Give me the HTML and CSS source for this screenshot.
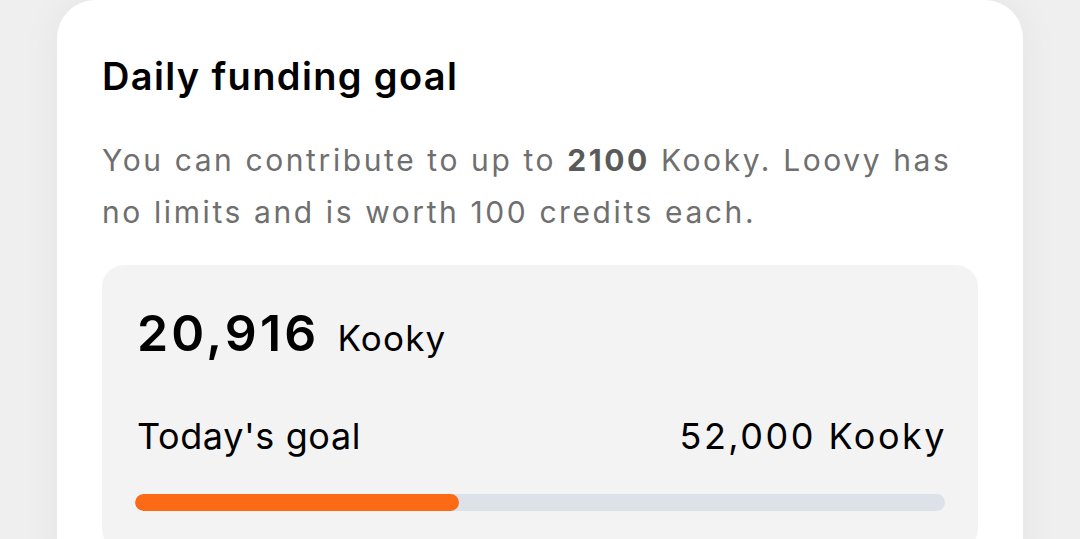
FILE: index.html
```html
<!DOCTYPE html>
<html lang="en">
<head>
    <meta charset="UTF-8">
    <meta name="viewport" content="width=device-width, initial-scale=1.0">
    <title>Daily funding goal</title>
    <link rel="stylesheet" href="styles.css">
</head>
<body>
    <div class="card">
        <h2 class="card-title">Daily funding goal</h2>
        <p class="card-desc">You can contribute to up to <b>2100</b> Kooky. Loovy has no limits and is worth 100 credits each.</p>

        <div class="goal-box">
            <div class="goal-total">
                <span class="goal-amount">20,916</span>
                <span class="goal-unit">Kooky</span>
            </div>
            <div class="goal-row">
                <span>Today's goal</span>
                <span class="goal-target">52,000 Kooky</span>
            </div>
            <div class="goal-bar">
                <div class="goal-fill" style="width: 40%"></div>
            </div>
        </div>
    </div>
</body>
</html>
```

FILE: styles.css
```css
body {
    margin: 0;
    padding: 0 57px;
    background-color: #efefef;
    font-family: Inter, "Noto Sans", sans-serif;
    color: #000;
    height: 539px;
    overflow: hidden;
}
.card {
    background-color: #fff;
    border-radius: 38px;
    padding: 50px 45px 40px;
    box-shadow: 0 0 40px rgba(0, 0, 0, 0.05);
}
.card-title {
    margin: 0;
    font-size: 38px;
    font-weight: 600;
    letter-spacing: 1.35px;
    line-height: 52px;
}
.card-desc {
    margin: 32px 0 0;
    font-size: 30px;
    letter-spacing: 2.6px;
    line-height: 52px;
    color: #6f6f6f;
}
.card-desc b {
    font-weight: 700;
    color: #5a5a5a;
}
.goal-box {
    margin-top: 27px;
    background-color: #f3f3f3;
    border-radius: 22px;
    padding: 38px 33px 40px;
}
.goal-total {
    display: flex;
    align-items: baseline;
    gap: 18px;
    padding-left: 2px;
}
.goal-amount {
    font-size: 50px;
    font-weight: 600;
    letter-spacing: 3.2px;
    line-height: 60px;
}
.goal-unit {
    font-size: 35px;
    letter-spacing: 1.2px;
}
.goal-row {
    display: flex;
    justify-content: space-between;
    margin-top: 48px;
    padding-left: 2px;
    font-size: 36px;
    letter-spacing: 0.6px;
    line-height: 50px;
}
.goal-target {
    letter-spacing: 2.5px;
    margin-right: -2px;
}
.goal-bar {
    margin-top: 33px;
    height: 17px;
    border-radius: 9px;
    background-color: #dde1e8;
    overflow: hidden;
}
.goal-fill {
    height: 100%;
    border-radius: 9px;
    background-color: #fd6a16;
}
```
